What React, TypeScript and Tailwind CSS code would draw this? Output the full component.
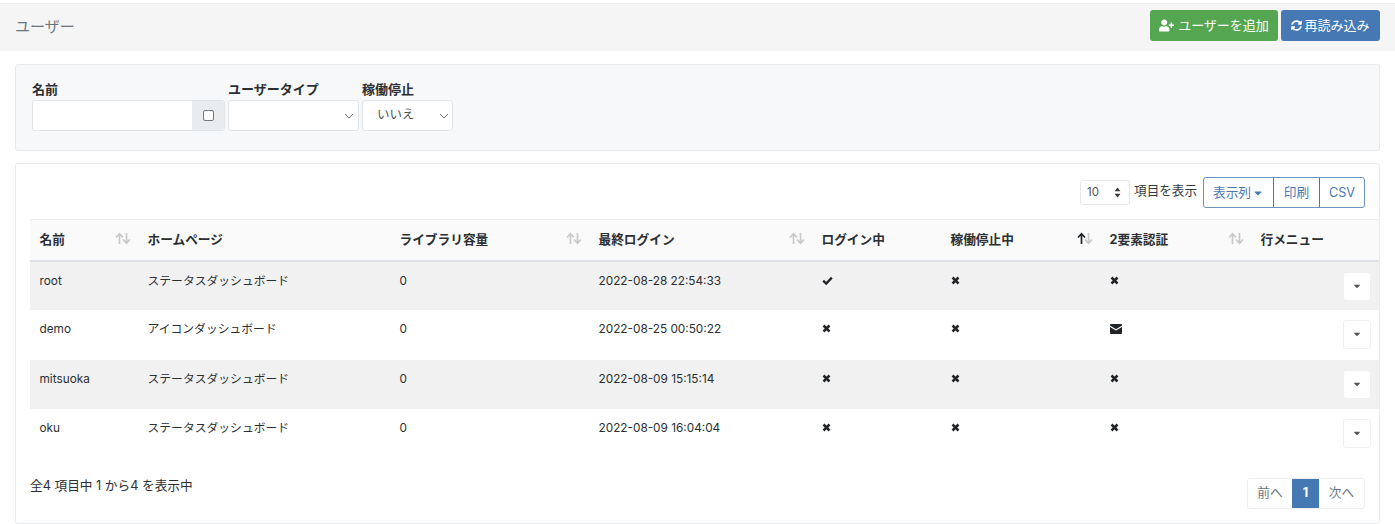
import React from 'react';
import { FaUserPlus, FaSyncAlt, FaCaretDown } from 'react-icons/fa';

const font = { fontFamily: 'Inter, "Noto Sans CJK JP", sans-serif' };

// sort arrows in the table header, active = up arrow darkened
const SortIcon: React.FC<{ active?: boolean }> = ({ active }) => (
    <svg width="16" height="13" viewBox="0 0 16 13" className="shrink-0 -mt-[3px]">
        <path d="M4.5 12V2.5M1 5.5l3.5-3.8L8 5.5" fill="none" stroke={active ? '#212529' : '#c8c8c8'} strokeWidth="1.7" />
        <path d="M11.5 1v9.5M8 7.5l3.5 3.8L15 7.5" fill="none" stroke="#c8c8c8" strokeWidth="1.7" />
    </svg>
);

const Chevron = () => (
    <svg width="10" height="6" viewBox="0 0 10 6" className="shrink-0">
        <path d="M1 1l4 4 4-4" fill="none" stroke="#5c6268" strokeWidth="0.9" />
    </svg>
);

const columns = [
    { label: '名前', w: 'w-[108px]', sort: true },
    { label: 'ホームページ', w: 'w-[252px]' },
    { label: 'ライブラリ容量', w: 'w-[199px]', sort: true },
    { label: '最終ログイン', w: 'w-[223px]', sort: true },
    { label: 'ログイン中', w: 'w-[129px]' },
    { label: '稼働停止中', w: 'w-[159px]', sort: true, active: true },
    { label: '2要素認証', w: 'w-[151px]', sort: true },
    { label: '行メニュー', w: 'w-[128px]' },
];

const users = [
    { name: 'root', home: 'ステータスダッシュボード', last: '2022-08-28 22:54:33', login: 'check', tfa: 'x', h: 'h-[49px]' },
    { name: 'demo', home: 'アイコンダッシュボード', last: '2022-08-25 00:50:22', login: 'x', tfa: 'mail', h: 'h-[50px]' },
    { name: 'mitsuoka', home: 'ステータスダッシュボード', last: '2022-08-09 15:15:14', login: 'x', tfa: 'x', h: 'h-[49px]' },
    { name: 'oku', home: 'ステータスダッシュボード', last: '2022-08-09 16:04:04', login: 'x', tfa: 'x', h: 'h-[49px]' },
];

const StateIcon: React.FC<{ kind: string }> = ({ kind }) => {
    if (kind === 'check') {
        return (
            <svg width="11" height="9" viewBox="0 0 11 9" className="block">
                <path d="M1.2 4.6l3 3 5.6-6" fill="none" stroke="#212529" strokeWidth="2.3" />
            </svg>
        );
    }
    if (kind === 'mail') {
        return (
            <svg width="12" height="10" viewBox="0 0 12 10" className="block">
                <path d="M1 0h10a1 1 0 0 1 1 1v.6L6 5.2 0 1.6V1a1 1 0 0 1 1-1zM0 3l6 3.6L12 3v6a1 1 0 0 1-1 1H1a1 1 0 0 1-1-1z" fill="#212529" />
            </svg>
        );
    }
    return (
        <svg width="9" height="9" viewBox="0 0 9 9" className="block">
            <path d="M1.5 1.5l6 6M7.5 1.5l-6 6" fill="none" stroke="#212529" strokeWidth="2.5" />
        </svg>
    );
};

const App: React.FC = () => {
    return (
        <div className="w-[1395px] h-[524px] overflow-hidden bg-white text-[#2b2f33] text-[11.8px] pt-[3px]" style={font}>
            {/* Header */}
            <div className="h-[48px] bg-[#f5f5f5] border-t border-[#ececec] flex items-start justify-between pl-[15px] pr-[15px]">
                <h1 className="text-[15px] text-[#6c757d] font-normal mt-[12px]">ユーザー</h1>
                <div className="flex gap-[3px] mt-[6px]">
                    <button className="h-[31px] w-[128px] bg-[#55a650] text-white text-[13px] rounded-[3px] flex items-center justify-center gap-[4px]">
                        <FaUserPlus className="text-[15px]" />ユーザーを追加
                    </button>
                    <button className="h-[31px] w-[99px] bg-[#4679b3] text-white text-[13px] rounded-[3px] flex items-center justify-center gap-[2px]">
                        <FaSyncAlt className="text-[11px]" />再読み込み
                    </button>
                </div>
            </div>

            <div className="px-[15px] pt-[13px]">
                {/* Filters */}
                <div className="h-[87px] bg-[#f7f8f9] border border-[#e6e8ea] rounded-[3px] pl-[16px] pt-[16px] flex gap-[3px]">
                    <div>
                        <label className="block text-[13px] font-bold leading-[19px] -mt-[1px] pb-[1px]">名前</label>
                        <div className="flex h-[31px] w-[193px] border border-[#e2e5e8] rounded-[3px] overflow-hidden bg-white">
                            <input className="flex-1 min-w-0 outline-none" />
                            <div className="w-[32px] bg-[#e9ecef] flex items-center justify-center">
                                <span className="block w-[11px] h-[11px] bg-white border border-[#777] rounded-[2px]" />
                            </div>
                        </div>
                    </div>
                    <div>
                        <label className="block text-[13px] font-bold leading-[19px] -mt-[1px] pb-[1px]">ユーザータイプ</label>
                        <div className="flex h-[31px] w-[131px] border border-[#e2e5e8] rounded-[3px] bg-white items-center justify-end pr-[4px]">
                            <Chevron />
                        </div>
                    </div>
                    <div>
                        <label className="block text-[13px] font-bold leading-[19px] -mt-[1px] pb-[1px]">稼働停止</label>
                        <div className="flex h-[31px] w-[91px] border border-[#e2e5e8] rounded-[3px] bg-white items-center justify-between pl-[14px] pr-[3px] text-[12.5px] text-[#495057]">
                            いいえ<Chevron />
                        </div>
                    </div>
                </div>

                {/* Users table */}
                <div className="mt-[12px] h-[361px] border border-[#e9ebed] rounded-[3px] pl-[14px] pt-[13px]">
                    <div className="flex justify-end items-center h-[31px] mr-[14px]">
                        <div className="h-[25px] w-[50px] border border-[#e6e8ea] rounded-[3px] flex items-center justify-between pl-[6px] pr-[8px] text-[11.5px] text-[#495057]">
                            10
                            <svg width="7" height="11" viewBox="0 0 7 11"><path d="M3.5 0.5L6.5 4.3H.5zM3.5 10.5L.5 6.7H6.5z" fill="#343a40" /></svg>
                        </div>
                        <span className="ml-[4px] mr-[6px] text-[12.6px] text-[#343a40] -mt-[3px]">項目を表示</span>
                        <div className="flex h-[31px] border border-[#6a93c2] rounded-[3px] text-[#4679b3] text-[12.7px] divide-x divide-[#4679b3]">
                            <span className="w-[70px] flex items-center justify-center gap-[1px]">表示列<FaCaretDown className="text-[12px]" /></span>
                            <span className="w-[46px] flex items-center justify-center">印刷</span>
                            <span className="w-[44px] flex items-center justify-center">CSV</span>
                        </div>
                    </div>

                    <table className="mt-[11px] table-fixed border-collapse w-[1349px]">
                        <thead>
                            <tr className="h-[41px] bg-[#fafafa] border-t border-[#eceef0] border-b-2 border-b-[#dee2e6]">
                                {columns.map(col => (
                                    <th key={col.label} className={`${col.w} pl-[9.5px] pr-[7px] text-left text-[12.7px] font-bold`}>
                                        <div className="flex items-center justify-between">
                                            <span>{col.label}</span>
                                            {col.sort && <SortIcon active={col.active} />}
                                        </div>
                                    </th>
                                ))}
                            </tr>
                        </thead>
                        <tbody>
                            {users.map((u, i) => (
                                <tr key={u.name} className={`${u.h} ${i % 2 === 0 ? 'bg-[#f1f1f1]' : 'bg-white'}`}>
                                    <td className="pl-[9.5px] align-top pt-[11px]">{u.name}</td>
                                    <td className="pl-[9.5px] align-top pt-[11px]">{u.home}</td>
                                    <td className="pl-[9.5px] align-top pt-[11px]">0</td>
                                    <td className="pl-[9.5px] align-top pt-[11px]">{u.last}</td>
                                    <td className="pl-[9.5px] align-top pt-[14px]"><StateIcon kind={u.login} /></td>
                                    <td className="pl-[9.5px] align-top pt-[14px]"><StateIcon kind="x" /></td>
                                    <td className="pl-[9.5px] align-top pt-[14px]"><StateIcon kind={u.tfa} /></td>
                                    <td className="align-top pt-[10px] pr-[8px]">
                                        <div className="ml-auto w-[28px] h-[29px] bg-white border border-[#f0f0f0] rounded-[3px] flex items-center justify-center">
                                            <FaCaretDown className="text-[10px] text-[#555]" />
                                        </div>
                                    </td>
                                </tr>
                            ))}
                        </tbody>
                    </table>

                    <div className="flex justify-between items-start mr-[14px]">
                        <span className="mt-[18px] text-[12.7px]">全4 項目中 1 から4 を表示中</span>
                        <div className="mt-[20px] flex h-[31px] border border-[#eceef0] rounded-[3px] text-[12.7px] text-[#6c757d]">
                            <span className="w-[44px] flex items-center justify-center">前へ</span>
                            <span className="w-[27px] flex items-center justify-center bg-[#4679b3] text-white font-bold">1</span>
                            <span className="w-[45px] flex items-center justify-center">次へ</span>
                        </div>
                    </div>
                </div>
            </div>
        </div>
    );
};

export default App;
